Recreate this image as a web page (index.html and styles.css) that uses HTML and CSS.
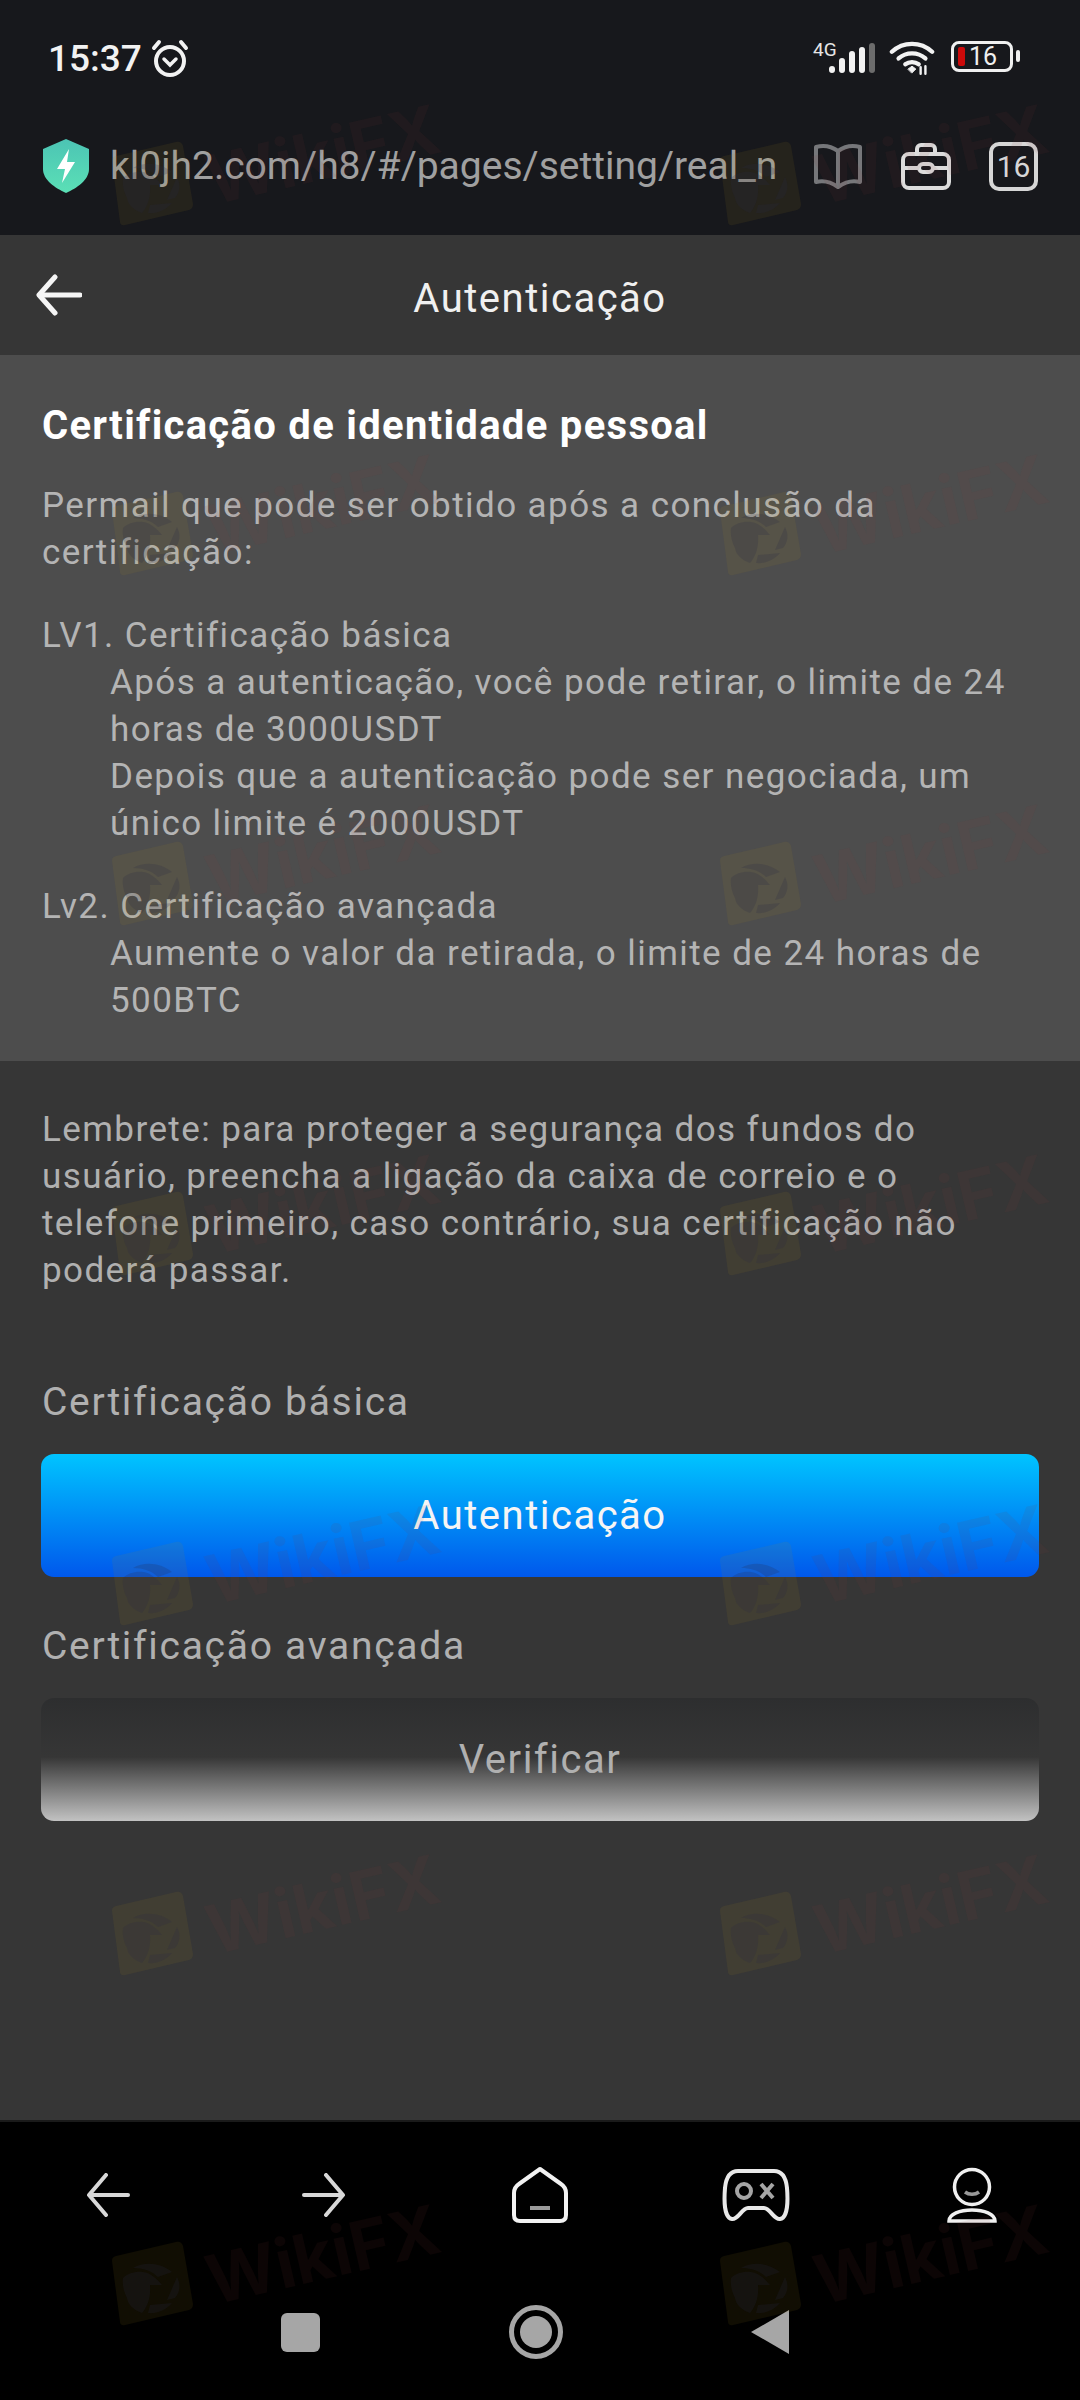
FILE: index.html
```html
<!DOCTYPE html>
<html lang="pt">
<head>
    <meta charset="UTF-8">
    <meta name="viewport" content="width=device-width, initial-scale=1.0">
    <title>Autenticação</title>
    <link rel="stylesheet" href="styles.css">
</head>
<body>
    <header class="browser-top">
        <div class="status-bar">
            <div class="status-left">
                <span class="clock">15:37</span>
                <svg class="alarm-icon" viewBox="0 0 40 40" fill="none" stroke="#f2f2f2" stroke-width="4" stroke-linecap="round">
                    <circle cx="20" cy="22" r="14"/>
                    <path d="M4 9 9 3M36 9 31 3"/>
                    <path d="M14 20l6 6 6-6" stroke-width="3.5"/>
                </svg>
            </div>
            <div class="status-right">
                <div class="signal">
                    <span class="net-type">4G</span>
                    <svg class="signal-icon" viewBox="0 0 48 30" stroke-width="6" stroke-linecap="round">
                        <path d="M4 27v-1M14 27V18M24 27V11M34 27V7" stroke="#f2f2f2"/>
                        <path d="M44 27V3" stroke="#6c6c6c"/>
                    </svg>
                </div>
                <svg class="wifi-icon" viewBox="0 0 48 36" fill="none" stroke="#f2f2f2" stroke-width="4.5" stroke-linecap="round">
                    <path d="M3 12C15 1 33 1 45 12"/>
                    <path d="M10 19c8-7 20-7 28 0"/>
                    <path d="M17 25c4-3 10-3 14 0"/>
                    <path d="M20 30l4-3 4 3-4 4z" fill="#f2f2f2" stroke-width="1"/>
                    <path d="M33 28v7M38 27v8" stroke-width="2.5"/>
                </svg>
                <div class="battery">
                    <div class="battery-body">
                        <span class="battery-level"></span>
                        <span class="battery-text">16</span>
                    </div>
                    <span class="battery-tip"></span>
                </div>
            </div>
        </div>
        <div class="url-bar">
            <svg class="shield-icon" viewBox="0 0 46 54">
                <defs>
                    <linearGradient id="shieldFill" x1="0" y1="0" x2="0" y2="1">
                        <stop offset="0" stop-color="#4cc4b4"/>
                        <stop offset="1" stop-color="#5be0b6"/>
                    </linearGradient>
                </defs>
                <path d="M23 0 46 10V30C46 41 34 49 23 54 12 49 0 41 0 30V10Z" fill="url(#shieldFill)"/>
                <path d="M26 10 14 30H22L19 44 32 23H24Z" fill="#fff"/>
            </svg>
            <div class="url-text">kl0jh2.com/h8/#/pages/setting/real_n</div>
            <div class="url-actions">
                <svg class="book-icon" viewBox="0 0 50 48" fill="none" stroke="#76777a" stroke-width="4" stroke-linejoin="round">
                    <path d="M25 9C18 4 10 3 3 5V40C10 38 18 40 25 45 32 40 40 38 47 40V5C40 3 32 4 25 9Z"/>
                    <path d="M25 9V45"/>
                </svg>
                <svg class="case-icon" viewBox="0 0 50 48" fill="none" stroke="#dcdcdc" stroke-width="4" stroke-linejoin="round">
                    <rect x="2" y="12" width="46" height="34" rx="6"/>
                    <path d="M16 12V7a4 4 0 0 1 4-4h10a4 4 0 0 1 4 4v5"/>
                    <path d="M2 26H18M32 26H48"/>
                    <rect x="18" y="22" width="14" height="8" rx="4"/>
                </svg>
                <div class="tab-count">16</div>
            </div>
        </div>
    </header>

    <nav class="page-nav">
        <svg class="back-icon" viewBox="0 0 46 42" fill="none" stroke="#f5f5f5" stroke-width="5" stroke-linecap="round" stroke-linejoin="round">
            <path d="M19 3 3 21 19 39"/>
            <path d="M4 21H44"/>
        </svg>
        <h1 class="page-title">Autenticação</h1>
    </nav>

    <main class="page-content">
        <section class="cert-panel">
            <h2 class="cert-title">Certificação de identidade pessoal</h2>
            <p class="cert-text">Permail que pode ser obtido após a conclusão da certificação:</p>
            <div class="cert-level">
                <p class="cert-text">LV1. Certificação básica</p>
                <p class="cert-text cert-indent">Após a autenticação, você pode retirar, o limite de 24 horas de 3000USDT</p>
                <p class="cert-text cert-indent">Depois que a autenticação pode ser negociada, um único limite é 2000USDT</p>
            </div>
            <div class="cert-level">
                <p class="cert-text">Lv2. Certificação avançada</p>
                <p class="cert-text cert-indent">Aumente o valor da retirada, o limite de 24 horas de 500BTC</p>
            </div>
        </section>

        <p class="reminder">Lembrete: para proteger a segurança dos fundos do usuário, preencha a ligação da caixa de correio e o telefone primeiro, caso contrário, sua certificação não poderá passar.</p>

        <section class="cert-actions">
            <div class="action-label">Certificação básica</div>
            <button class="action-btn btn-blue">Autenticação</button>
            <div class="action-label">Certificação avançada</div>
            <button class="action-btn btn-gray">Verificar</button>
        </section>
    </main>

    <footer class="bottom-bars">
        <div class="browser-nav">
            <svg class="nav-arrow" viewBox="0 0 44 44" fill="none" stroke="#d8d8d8" stroke-width="4" stroke-linecap="round" stroke-linejoin="round">
                <path d="M20 2 3 22 20 42"/>
                <path d="M4 22H42"/>
            </svg>
            <svg class="nav-arrow" viewBox="0 0 44 44" fill="none" stroke="#d8d8d8" stroke-width="4" stroke-linecap="round" stroke-linejoin="round">
                <path d="M24 2 41 22 24 42"/>
                <path d="M40 22H2"/>
            </svg>
            <svg class="nav-home" viewBox="0 0 56 56" fill="none" stroke="#f2f2f2" stroke-width="4" stroke-linejoin="round">
                <path d="M28 2 49 17C52 19 54 22 54 26V48C54 52 52 54 48 54H8C4 54 2 52 2 48V26C2 22 4 19 7 17Z"/>
                <path d="M18 41H38" stroke="#9a9a9a" stroke-width="4"/>
            </svg>
            <svg class="nav-game" viewBox="0 0 68 54" fill="none" stroke="#e8e8e8" stroke-width="4" stroke-linejoin="round">
                <path d="M16 3H52C60 3 64 10 65 20 66 32 66 50 58 51 52 52 48 40 42 40H26C20 40 16 52 10 51 2 50 2 32 3 20 4 10 8 3 16 3Z"/>
                <circle cx="22" cy="23" r="7" stroke="#a5a5a5"/>
                <path d="M39 16 51 30M51 16 39 30" stroke="#a5a5a5"/>
            </svg>
            <svg class="nav-user" viewBox="0 0 52 56" fill="none" stroke="#f0f0f0" stroke-width="3.5">
                <circle cx="26" cy="20" r="17.5"/>
                <path d="M19 25c4 3 10 3 14 0" stroke="#999"/>
                <path d="M3 54C3 47 14 43 26 43S49 47 49 54Z"/>
            </svg>
        </div>
        <div class="system-nav">
            <span class="sys-square"></span>
            <span class="sys-circle"><span class="sys-dot"></span></span>
            <svg class="sys-back" viewBox="0 0 38 44"><path d="M38 0V44L0 22Z" fill="#a6a6a6"/></svg>
        </div>
    </footer>

    <div class="watermarks" id="watermarks"></div>

    <script>
        // same mark repeats over the whole screen
        const markHtml = `
            <div class="wm">
                <svg class="wm-logo" viewBox="0 0 84 90">
                    <path d="M6 16 66 2C70 1 72 3 73 6L83 64C83 67 82 69 79 70L15 85C12 86 10 84 10 82L2 21C2 18 3 17 6 16Z" class="wm-plate"/>
                    <g class="wm-eagle">
                        <path d="M13 38C18 33 26 31 33 32 41 33 47 39 52 45L40 45C41 56 38 66 32 73 24 70 18 65 17 58 14 52 12 45 13 38Z"/>
                        <path d="M23 28C35 21 51 23 62 32L48 37C42 31 33 28 23 28Z"/>
                        <path d="M67 37C71 45 70 52 65 58L57 60Z"/>
                        <path d="M62 63C56 70 47 74 38 73L40 65Z"/>
                    </g>
                </svg>
                <span class="wm-text">WikiFX</span>
            </div>`;
        document.getElementById('watermarks').innerHTML = markHtml.repeat(14);
    </script>
</body>
</html>
```

FILE: styles.css
```css
* {
    box-sizing: border-box;
}

html, body {
    margin: 0;
    padding: 0;
}

body {
    position: relative;
    width: 1080px;
    height: 2400px;
    overflow: hidden;
    display: flex;
    flex-direction: column;
    background-color: #363636;
    font-family: Roboto, "Liberation Sans", sans-serif;
    color: #b0b0b0;
}

/* top of the browser */
.browser-top {
    height: 235px;
    background-color: #17181c;
    flex-shrink: 0;
}

.status-bar {
    height: 114px;
    padding: 37px 60px 0 48px;
    display: flex;
    justify-content: space-between;
    align-items: flex-start;
}

.status-left {
    display: flex;
    align-items: center;
    gap: 8px;
}

.clock {
    font-size: 37px;
    font-weight: 500;
    color: #f2f2f2;
    line-height: 44px;
}

.alarm-icon {
    width: 40px;
    height: 40px;
}

.status-right {
    display: flex;
    align-items: flex-start;
    margin-top: 3px;
}

.signal {
    position: relative;
    width: 63px;
    height: 34px;
    margin-right: 13px;
}

.net-type {
    position: absolute;
    left: 0;
    top: 0;
    font-size: 19px;
    line-height: 20px;
    color: #e6e6e6;
}

.signal-icon {
    position: absolute;
    right: 0;
    top: 3px;
    width: 48px;
    height: 30px;
}

.wifi-icon {
    width: 46px;
    height: 35px;
    margin-right: 16px;
}

.battery {
    display: flex;
    align-items: center;
    gap: 3px;
    height: 32px;
}

.battery-body {
    width: 62px;
    height: 31px;
    border: 3px solid #f0f0f0;
    border-radius: 8px;
    display: flex;
    align-items: center;
    padding-left: 4px;
    gap: 4px;
}

.battery-level {
    width: 7px;
    height: 19px;
    border-radius: 2px;
    background-color: #cc0a0a;
}

.battery-text {
    font-size: 25px;
    color: #f0f0f0;
    line-height: 25px;
}

.battery-tip {
    width: 4px;
    height: 12px;
    border-radius: 2px;
    background-color: #f0f0f0;
}

.url-bar {
    height: 121px;
    padding: 0 42px 17px 43px;
    display: flex;
    align-items: center;
}

.shield-icon {
    width: 46px;
    height: 54px;
    flex-shrink: 0;
}

.url-text {
    width: 669px;
    margin-left: 21px;
    overflow: hidden;
    white-space: nowrap;
    font-size: 39px;
    color: #a0a0a0;
}

.url-actions {
    display: flex;
    align-items: center;
    gap: 38px;
    margin-left: 34px;
}

.book-icon, .case-icon {
    width: 50px;
    height: 48px;
}

.tab-count {
    width: 49px;
    height: 49px;
    border: 4px solid #d6d6d6;
    border-radius: 10px;
    font-size: 30px;
    color: #d6d6d6;
    display: flex;
    align-items: center;
    justify-content: center;
}

/* page header */
.page-nav {
    position: relative;
    height: 120px;
    flex-shrink: 0;
    display: flex;
    align-items: center;
    justify-content: center;
    background-color: #363636;
}

.back-icon {
    position: absolute;
    left: 36px;
    top: 39px;
    width: 46px;
    height: 42px;
}

.page-title {
    margin: 6px 0 0;
    font-size: 40px;
    font-weight: 400;
    letter-spacing: 1.5px;
    color: #f0f0f0;
}

.page-content {
    flex-grow: 1;
}

/* certification block */
.cert-panel {
    height: 706px;
    padding: 47px 42px 0;
    background-color: #4d4d4d;
}

.cert-title {
    margin: 0 0 32px;
    font-size: 40px;
    line-height: 48px;
    font-weight: 700;
    letter-spacing: 1.3px;
    color: #fff;
}

.cert-text {
    margin: 0;
    font-size: 35px;
    line-height: 47px;
    letter-spacing: 1.42px;
    color: #b4b4b4;
}

.cert-indent {
    padding-left: 68px;
}

.cert-level {
    margin-top: 36px;
}

.reminder {
    margin: 45px 60px 0 42px;
    font-size: 35px;
    line-height: 47px;
    letter-spacing: 1.42px;
    color: #b0b0b0;
}

.cert-actions {
    padding: 84px 41px 0 41px;
}

.action-label {
    font-size: 39px;
    line-height: 48px;
    letter-spacing: 1.72px;
    color: #b0b0b0;
    padding-left: 1px;
    margin-bottom: 28px;
}

.action-btn {
    display: block;
    width: 100%;
    height: 123px;
    margin-bottom: 45px;
    border: 0;
    border-radius: 13px;
    font-family: inherit;
    font-size: 40px;
    letter-spacing: 1.5px;
}

.btn-blue {
    background: linear-gradient(#00c4ff, #0058ec);
    color: #f5f5f5;
}

.btn-gray {
    background: linear-gradient(#2d2e2f 0%, #363636 48%, #c2c2c2 100%);
    color: #b0b0b0;
}

/* bottom bars */
.bottom-bars {
    height: 280px;
    flex-shrink: 0;
    background-color: #000;
    border-top: 2px solid #1a1a1a;
}

.browser-nav {
    height: 146px;
    display: grid;
    grid-template-columns: repeat(5, 1fr);
    justify-items: center;
    align-items: center;
}

.nav-arrow {
    width: 44px;
    height: 44px;
}

.nav-home {
    width: 56px;
    height: 56px;
}

.nav-game {
    width: 68px;
    height: 54px;
}

.nav-user {
    width: 52px;
    height: 56px;
}

.system-nav {
    height: 80px;
    margin-top: 24px;
    display: flex;
    align-items: center;
    padding-left: 281px;
}

.sys-square {
    width: 39px;
    height: 39px;
    border-radius: 6px;
    background-color: #a6a6a6;
}

.sys-circle {
    width: 54px;
    height: 54px;
    margin-left: 189px;
    border: 5px solid #a6a6a6;
    border-radius: 50%;
    display: flex;
    align-items: center;
    justify-content: center;
}

.sys-dot {
    width: 32px;
    height: 32px;
    border-radius: 50%;
    background-color: #a6a6a6;
}

.sys-back {
    width: 38px;
    height: 44px;
    margin-left: 188px;
}

/* WikiFX watermark, lies over everything */
.watermarks {
    position: absolute;
    inset: 0;
    padding: 107px 0 0 110px;
    display: grid;
    grid-template-columns: repeat(2, 608px);
    grid-auto-rows: 350px;
    overflow: hidden;
    pointer-events: none;
}

.wm {
    position: relative;
    width: 340px;
    height: 120px;
}

.wm-logo {
    position: absolute;
    left: 0;
    top: 33px;
    width: 84px;
    height: 90px;
}

.wm-plate {
    fill: rgba(170, 140, 30, 0.1);
}

.wm-eagle {
    fill: rgba(40, 40, 70, 0.2);
}

.wm-text {
    position: absolute;
    left: 94px;
    top: 7px;
    font-family: Inter, sans-serif;
    font-size: 68px;
    font-weight: 700;
    line-height: 80px;
    color: rgba(130, 60, 50, 0.09);
    transform: rotate(-13deg);
}
```
